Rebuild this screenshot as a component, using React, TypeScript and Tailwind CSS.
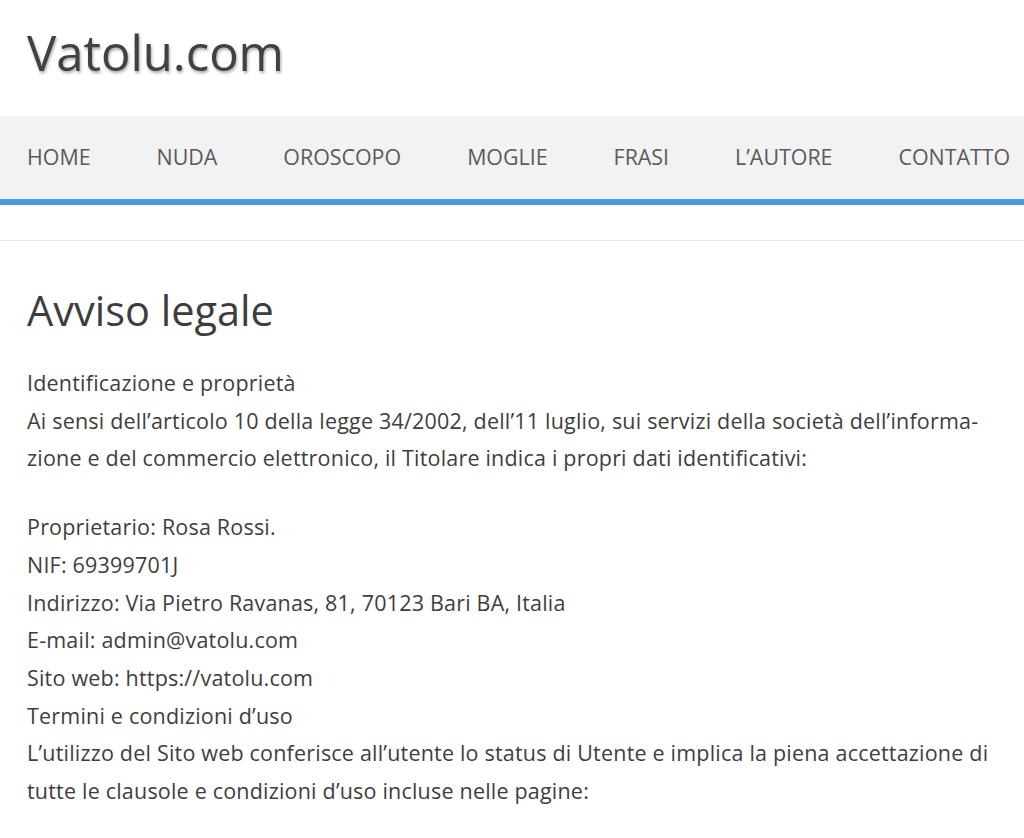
import React from "react";

const nav = ["HOME", "NUDA", "OROSCOPO", "MOGLIE", "FRASI", "L’AUTORE", "CONTATTO"];

export default function App() {
  return (
    <div className="min-h-[838px] bg-white text-[#404040]" style={{ fontFamily: '"Open Sans", "Noto Sans", sans-serif' }}>
      <header className="h-[116px] flex items-center pl-[27px] pb-[12px]">
        <div className="text-[49px] leading-none text-[#414141] [text-shadow:1px_2px_3px_rgba(0,0,0,0.35)]">
          Vatolu.com
        </div>
      </header>
      <nav className="h-[89px] bg-[#f2f2f2] border-b-[6px] border-[#4a9bdc] flex items-center pl-[27px] gap-[66px] whitespace-nowrap overflow-hidden">
        {nav.map((n) => (
          <span key={n} className="text-[21.4px] text-[#5a5a5a]">{n}</span>
        ))}
      </nav>
      <div className="h-[36px] border-b border-[#e6e6e6]" />
      <main className="px-[27px] pt-[43px]">
        <h1 className="text-[41.5px] leading-[52px] text-[#3d3d3d] mb-[28px]">Avviso legale</h1>
        <div className="text-[21.5px] tracking-[0.2px] leading-[37.7px] text-[#3e3e3e]">
          <p className="mb-[31px]">
            Identificazione e proprietà<br />
            Ai sensi dell’articolo 10 della legge 34/2002, dell’11 luglio, sui servizi della società dell’informa-<br />
            zione e del commercio elettronico, il Titolare indica i propri dati identificativi:
          </p>
          <p>
            Proprietario: Rosa Rossi.<br />
            NIF: 69399701J<br />
            Indirizzo: Via Pietro Ravanas, 81, 70123 Bari BA, Italia<br />
            E-mail: admin@vatolu.com<br />
            Sito web: https://vatolu.com<br />
            Termini e condizioni d’uso<br />
            L’utilizzo del Sito web conferisce all’utente lo status di Utente e implica la piena accettazione di<br />
            tutte le clausole e condizioni d’uso incluse nelle pagine:
          </p>
        </div>
      </main>
    </div>
  );
}
